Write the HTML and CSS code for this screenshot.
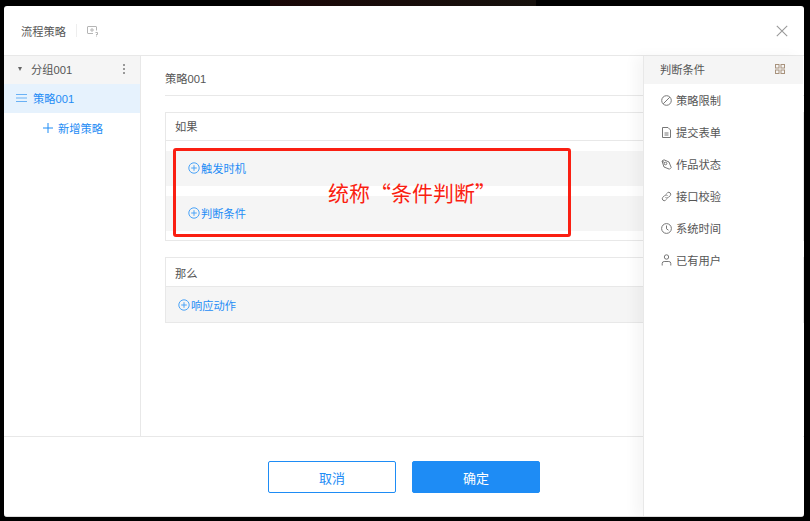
FILE: index.html
```html
<!DOCTYPE html>
<html lang="zh">
<head>
  <meta charset="utf-8">
  <title>流程策略</title>
  <link rel="stylesheet" href="styles.css">
</head>
<body>
  <div class="backdrop-strip"></div>
  <div class="modal">
    <div class="header">
      <span class="header-title">流程策略</span>
      <span class="header-sep"></span>
      <svg class="header-icon" width="12" height="12" viewBox="0 0 12 12" fill="none" stroke="#b5b5b5">
        <path d="M9.5 5.5V2A.5.5 0 0 0 9 1.5H1A.5.5 0 0 0 .5 2V8A.5.5 0 0 0 1 8.5H6"/><path d="M5 3V7M3 5H7"/><path d="M8.5 7.5H10.5V9.5H9"/><path d="M9 11H10"/>
      </svg>
      <svg class="close" width="12" height="12" viewBox="0 0 12 12" stroke="#999" stroke-width="1.1"><path d="M.8.8L11.2 11.2M11.2.8L.8 11.2"/></svg>
    </div>

    <div class="main">
      <div class="side">
        <div class="group">
          <span class="caret"></span>
          <span class="group-name">分组001</span>
          <span class="dots"><i></i><i></i><i></i></span>
        </div>
        <div class="item">
          <svg width="11" height="8" viewBox="0 0 11 8" stroke="#69b1f5"><path d="M0 .5H11M0 4H11M0 7.5H11"/></svg>
          <span>策略001</span>
        </div>
        <div class="add">
          <svg width="10" height="10" viewBox="0 0 10 10" stroke="#1e8cf5"><path d="M5 0V10M0 5H10"/></svg>
          <span>新增策略</span>
        </div>
      </div>

      <div class="content">
        <div class="name">策略001</div>
        <div class="box box-if">
          <div class="box-head">如果</div>
          <div class="box-body">
            <div class="cond">
              <svg class="plus" width="12" height="12" viewBox="0 0 12 12" fill="none" stroke="#4aa3f7"><circle cx="6" cy="6" r="5.2"/><path d="M6 3.2V8.8M3.2 6H8.8"/></svg>
              <span>触发时机</span>
            </div>
            <div class="cond">
              <svg class="plus" width="12" height="12" viewBox="0 0 12 12" fill="none" stroke="#4aa3f7"><circle cx="6" cy="6" r="5.2"/><path d="M6 3.2V8.8M3.2 6H8.8"/></svg>
              <span>判断条件</span>
            </div>
          </div>
        </div>
        <div class="box box-then">
          <div class="box-head">那么</div>
          <div class="action">
            <svg class="plus" width="12" height="12" viewBox="0 0 12 12" fill="none" stroke="#4aa3f7"><circle cx="6" cy="6" r="5.2"/><path d="M6 3.2V8.8M3.2 6H8.8"/></svg>
            <span>响应动作</span>
          </div>
        </div>
      </div>
    </div>

    <div class="footer">
      <button class="btn">取消</button>
      <button class="btn btn-primary">确定</button>
    </div>

    <div class="panel">
      <div class="panel-head">
        <span>判断条件</span>
        <svg width="10" height="10" viewBox="0 0 10 10" fill="none" stroke="#a8927c"><rect x=".5" y=".5" width="3.5" height="3.5"/><rect x="6" y=".5" width="3.5" height="3.5"/><rect x=".5" y="6" width="3.5" height="3.5"/><rect x="6" y="6" width="3.5" height="3.5"/></svg>
      </div>
      <div class="panel-item">
        <svg width="11" height="11" viewBox="0 0 11 11" fill="none" stroke="#777"><circle cx="5.5" cy="5.5" r="4.8"/><path d="M2.2 8.8L8.8 2.2"/></svg>
        <span>策略限制</span>
      </div>
      <div class="panel-item">
        <svg width="11" height="11" viewBox="0 0 11 11" fill="none" stroke="#777"><path d="M1.5.5H7L9.5 3V10.5H1.5Z"/><path d="M3.5 6H7.5M3.5 8H7.5"/></svg>
        <span>提交表单</span>
      </div>
      <div class="panel-item">
        <svg width="11" height="11" viewBox="0 0 11 11" fill="none" stroke="#777"><path d="M1 2L3 .8L8 3L10.2 8.5L8.5 10.2L3 8Z"/><circle cx="4.5" cy="4.5" r="1.3"/><path d="M1 2L3.6 3.6"/></svg>
        <span>作品状态</span>
      </div>
      <div class="panel-item">
        <svg width="11" height="11" viewBox="0 0 11 11" fill="none" stroke="#777"><path d="M4.5 6.5A2 2 0 0 0 7.3 6.5L9.3 4.5A2 2 0 0 0 6.5 1.7L5.6 2.6"/><path d="M6.5 4.5A2 2 0 0 0 3.7 4.5L1.7 6.5A2 2 0 0 0 4.5 9.3L5.4 8.4"/></svg>
        <span>接口校验</span>
      </div>
      <div class="panel-item">
        <svg width="11" height="11" viewBox="0 0 11 11" fill="none" stroke="#777"><circle cx="5.5" cy="5.5" r="4.9"/><path d="M5.5 2.5V5.8L7.5 7.2"/></svg>
        <span>系统时间</span>
      </div>
      <div class="panel-item">
        <svg width="11" height="12" viewBox="0 0 11 12" fill="none" stroke="#777"><circle cx="5.5" cy="3" r="2.2"/><path d="M1.2 11.5V9.5A2 2 0 0 1 3.2 7.5H7.8A2 2 0 0 1 9.8 9.5V11.5"/></svg>
        <span>已有用户</span>
      </div>
    </div>

    <div class="note">统称“条件判断”</div>
  </div>
</body>
</html>
```

FILE: styles.css
```css
* {box-sizing: border-box;}
html, body {margin: 0; height: 100%;}
body {background: #000; padding: 0 6px 4px 4px; font-family: "Liberation Sans", "Noto Sans CJK SC", sans-serif; font-size: 11.25px; color: #555; overflow: hidden;}

.backdrop-strip {width: 266px; height: 6px; margin-left: 266px; background: linear-gradient(90deg, #1a0707, #16110d);}

.modal {position: relative; display: flex; flex-direction: column; width: 800px; height: 511px; background: #fff; border-radius: 3px; border-bottom: 1px solid #ddd; overflow: hidden;}

.header {display: flex; align-items: center; height: 50px; flex: none; padding-left: 17px; border-bottom: 1px solid #e8e8e8;}
.header-title {color: #555;}
.header-sep {width: 1px; height: 13px; margin: 0 10px; background: #eee;}
.close {margin-left: auto; margin-right: 16px;}

.main {display: flex; flex: 1; min-height: 0;}
.side {width: 137px; flex: none; border-right: 1px solid #e8e8e8;}
.group {display: flex; align-items: center; height: 28px; padding: 0 0 2px 14px; background: #f5f5f5;}
.caret {width: 0; height: 0; margin-right: 9px; border-left: 2.5px solid transparent; border-right: 2.5px solid transparent; border-top: 4px solid #666;}
.group-name {flex: 1;}
.dots {display: flex; flex-direction: column; gap: 2px; margin-right: 15px;}
.dots i {width: 2px; height: 2px; background: #999;}
.item {display: flex; align-items: center; gap: 6px; height: 29px; padding: 0 0 1px 12px; background: #e6f2fd; color: #1e8cf5;}
.add {display: flex; align-items: center; gap: 5px; height: 29px; padding-left: 39px; color: #1e8cf5;}

.content {flex: 1; min-width: 0; padding: 0 0 0 24px;}
.name {height: 40px; line-height: 47px; border-bottom: 1px solid #e8e8e8;}
.box {border: 1px solid #e8e8e8; background: #fff;}
.box-head {padding-left: 9px;}
.box-if {height: 129px; margin-top: 16px;}
.box-if .box-head {height: 28px; line-height: 28px; border-bottom: 1px solid #e8e8e8;}
.box-body {display: flex; flex-direction: column; gap: 10px; padding-top: 10px;}
.cond {display: flex; align-items: center; height: 35px; padding: 0 0 1px 22px; background: #f5f5f5; color: #1e8cf5;}
.plus {margin-right: 1px; flex: none;}
.box-then {height: 66px; margin-top: 16px;}
.box-then .box-head {height: 29px; line-height: 32px; border-bottom: 1px solid #e8e8e8;}
.action {display: flex; align-items: center; height: 35px; padding-left: 12px; background: #f5f5f5; color: #1e8cf5;}

.footer {display: flex; justify-content: center; gap: 16px; flex: none; height: 80px; padding-top: 24px; border-top: 1px solid #e8e8e8;}
.btn {width: 128px; height: 32px; border: 1px solid #1e8cf5; border-radius: 2px; background: #fff; color: #1e8cf5; font: inherit; font-size: 13px;}
.btn-primary {background: #1e8cf5; color: #fff;}

/* floats over the strategy form */
.panel {position: absolute; top: 50px; right: 1px; bottom: 0; width: 160px; background: #fff; border-left: 1px solid #e8e8e8; box-shadow: -8px 0 12px rgba(0, 0, 0, .04);}
.panel-head {display: flex; align-items: center; justify-content: space-between; height: 28px; padding: 0 18px 2px 16px; background: #f5f5f5;}
.panel-item {display: flex; align-items: center; gap: 4px; height: 32px; padding: 0 0 2px 17px;}
.panel-head + .panel-item {margin-top: 1px;}

/* annotation drawn on top of the screenshot */
.note {position: absolute; left: 169px; top: 142px; width: 398px; height: 89px; padding-left: 152px; border: 3px solid #fa1f12; border-radius: 3px; color: #fa1f12; font-family: "Noto Sans CJK SC", sans-serif; font-size: 21px; line-height: 83px;}
```
